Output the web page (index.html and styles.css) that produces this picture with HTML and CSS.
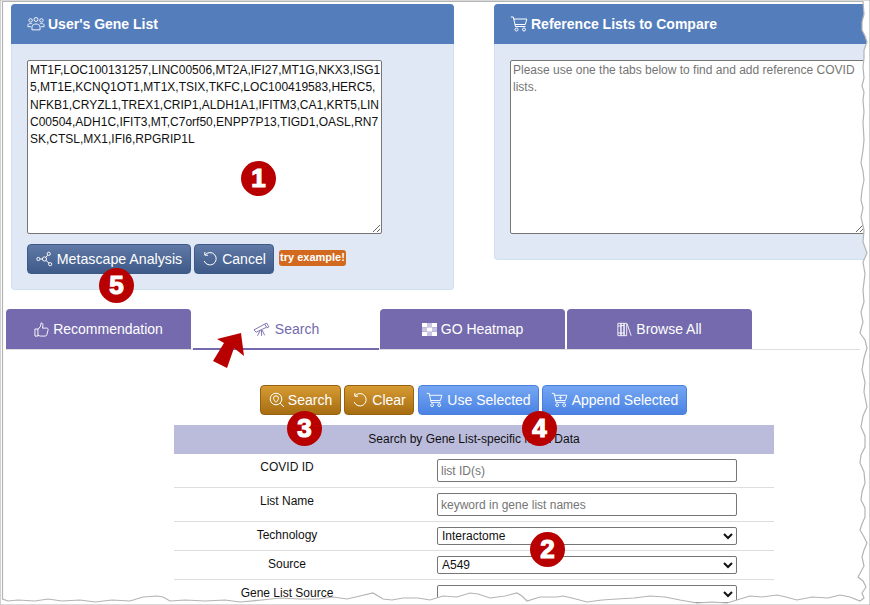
FILE: index.html
```html
<!DOCTYPE html>
<html lang="en">
<head>
<meta charset="utf-8">
<title>Metascape COVID gene list comparison</title>
<link rel="stylesheet" href="styles.css">
</head>
<body>
<div class="page">
  <section class="panels">
    <div class="panel panel-user">
      <h2 class="panel-head">
        <svg class="ico ico-head" viewBox="0 0 20 16"><circle cx="4" cy="4" r="1.9"/><circle cx="10" cy="3" r="2.2"/><circle cx="16" cy="4" r="1.9"/><path d="M1 11V9.500C1 8 2.200 7.500 4 7.500c.8 0 1.400.1 1.900.4M19 11V9.500C19 8 17.800 7.500 16 7.500c-.8 0-1.400.1-1.900.4M5.500 14.500v-3C5.500 9.300 7.500 8 10 8s4.500 1.300 4.500 3.500v3zM1 11h3.500M15.500 11H19"/></svg>
        User's Gene List
      </h2>
      <div class="panel-body">
        <textarea class="gene-text" spellcheck="false">MT1F,LOC100131257,LINC00506,MT2A,IFI27,MT1G,NKX3,ISG15,MT1E,KCNQ1OT1,MT1X,TSIX,TKFC,LOC100419583,HERC5,NFKB1,CRYZL1,TREX1,CRIP1,ALDH1A1,IFITM3,CA1,KRT5,LINC00504,ADH1C,IFIT3,MT,C7orf50,ENPP7P13,TIGD1,OASL,RN7SK,CTSL,MX1,IFI6,RPGRIP1L</textarea>
        <div class="actions">
          <button class="btn btn-navy btn-meta">
            <svg class="ico" viewBox="0 0 18 16"><circle cx="2.500" cy="8" r="1.700"/><circle cx="9" cy="8" r="2.200"/><circle cx="13.500" cy="2.500" r="1.700"/><circle cx="15" cy="13.500" r="1.700"/><path d="M4.200 8h2.600M10.400 6.300l2-2.400M10.600 9.600l3.200 2.700"/></svg>
            Metascape Analysis
          </button>
          <button class="btn btn-navy btn-cancel">
            <svg class="ico ico-undo" viewBox="0 0 16 16"><path d="M3.200 3.800A6.200 6.200 0 1 1 2.200 10M2.800 1v3.200H6"/></svg>
            Cancel
          </button>
          <span class="try">try example!</span>
        </div>
      </div>
    </div>
    <div class="panel panel-ref">
      <h2 class="panel-head">
        <svg class="ico ico-head" viewBox="0 0 18 16"><path d="M.8 1h2.600l2 9.500h10M3.800 3h13l-1.500 5.500H5"/><circle cx="6.500" cy="13.500" r="1.500"/><circle cx="14" cy="13.500" r="1.500"/></svg>
        Reference Lists to Compare
      </h2>
      <div class="panel-body">
        <textarea class="gene-text ref-text" placeholder="Please use one the tabs below to find and add reference COVID lists."></textarea>
      </div>
    </div>
  </section>

  <nav class="tabs">
    <a class="tab">
      <svg class="ico ico-tab" viewBox="0 0 16 16"><path d="M1 7.500h3.200V15H1zM4.200 8 7 4.500 7.500 1c1.500 0 2.300 1 2 2.800L9 6.500h4.500c1.300 0 1.800 1 1.500 2l-1.300 5c-.2 1-.9 1.500-1.800 1.500H7c-1.200 0-1.800-.5-2.800-1"/></svg>
      Recommendation
    </a>
    <a class="tab tab-active">
      <svg class="ico ico-scope" viewBox="0 0 20 16"><path d="M1 8.500l12-6.500 2 3.500-11.500 5.500zM13 2l2.200-1 2.500 4-2.700 1.200M8 9l-3 6M9.500 8.500V15M10 8.500l3 6"/></svg>
      Search
    </a>
    <a class="tab">
      <svg class="ico-grid" viewBox="0 0 15 13"><path fill="#fff" d="M0 0h5v4.300H0zM10 0h5v4.300h-5zM5 4.300h5v4.400H5zM0 8.700h5V13H0zM10 8.700h5V13h-5z"/><path fill="#c9c5e2" d="M5 0h5v4.300H5zM0 4.300h5v4.400H0zM10 4.300h5v4.400h-5zM5 8.700h5V13H5z"/></svg>
      GO Heatmap
    </a>
    <a class="tab">
      <svg class="ico ico-tab" viewBox="0 0 17 16"><path d="M1 1h3.500v14H1zM4.500 1H8v14H4.500zM8 1h3v14H8zM11.500 1.500l4.500 13.500M1 4h3.500M1 12h3.500M4.500 3.500H8M4.500 12H8"/></svg>
      Browse All
    </a>
  </nav>

  <section class="search">
    <div class="toolbar">
      <button class="btn btn-gold btn-search">
        <svg class="ico ico-undo" viewBox="0 0 16 16"><circle cx="7" cy="7" r="5.800"/><path d="M11.200 11.200 15 15M7 3.800A2.500 2.500 0 0 0 4.500 6.300C4.500 8 7 10.300 7 10.300S9.500 8 9.500 6.300A2.500 2.500 0 0 0 7 3.800z"/></svg>
        Search
      </button>
      <button class="btn btn-gold btn-clear">
        <svg class="ico ico-undo" viewBox="0 0 16 16"><path d="M3.200 3.800A6.200 6.200 0 1 1 2.200 10M2.800 1v3.200H6"/></svg>
        Clear
      </button>
      <button class="btn btn-blue btn-use">
        <svg class="ico" viewBox="0 0 18 16"><path d="M.8 1h2.600l2 9.500h10M3.800 3h13l-1.500 5.500H5"/><circle cx="6.500" cy="13.500" r="1.500"/><circle cx="14" cy="13.500" r="1.500"/></svg>
        Use Selected
      </button>
      <button class="btn btn-blue btn-append">
        <svg class="ico" viewBox="0 0 18 16"><path d="M.8 1h2.600l2 9.500h10M3.800 3h13l-1.500 5.500H5M10 4v3.500M8.200 5.700h3.600"/><circle cx="6.500" cy="13.500" r="1.500"/><circle cx="14" cy="13.500" r="1.500"/></svg>
        Append Selected
      </button>
    </div>
    <div class="form">
      <div class="form-head">Search by Gene List-specific Meta Data</div>
      <div class="row row-tall">
        <label class="row-label">COVID ID</label>
        <input class="field" placeholder="list ID(s)">
      </div>
      <div class="row row-tall">
        <label class="row-label">List Name</label>
        <input class="field" placeholder="keyword in gene list names">
      </div>
      <div class="row">
        <label class="row-label">Technology</label>
        <select class="pick"><option>Interactome</option></select>
      </div>
      <div class="row">
        <label class="row-label">Source</label>
        <select class="pick"><option>A549</option></select>
      </div>
      <div class="row">
        <label class="row-label">Gene List Source</label>
        <select class="pick"><option></option></select>
      </div>
    </div>
  </section>

  <svg class="torn" viewBox="0 0 870 605" aria-hidden="true">
    <path class="torn-mask" fill-rule="evenodd" d="M0 0H870V605H0Z M2.500 1.500 L863 1.500 L864 14 L862 22 L862 30 L865 36 L867 42 L864 50 L864 58 L863 67 L864 78 L862 86 L864 92 L863 100 L864 112 L863 122 L864 140 L863 150 L861 163 L863 171 L864 180 L862 190 L861 200 L863 208 L861 217 L864 230 L863 242 L867 253 L863 262 L865 274 L863 290 L864 302 L861 312 L863 322 L860 333 L865 340 L867 348 L864 358 L862 370 L865 382 L864 392 L867 407 L863 416 L861 427 L865 436 L865 447 L861 455 L860 463 L864 472 L865 483 L862 492 L861 500 L865 508 L865 517 L862 524 L860 530 L864 537 L867 543 L864 550 L862 557 L864 566 L858 577 L863 581 L866 587 L862 593 L864 598 L860 601 L850 597 L840 595 L828 598 L812 597 L797 600 L786 597 L777 595 L762 597 L750 596 L740 599 L727 603 L712 602 L697 603 L680 600 L665 597 L650 596 L634 598 L617 599 L602 600 L587 602 L572 598 L563 596 L557 597 L540 597 L527 601 L522 596 L517 593 L505 596 L490 598 L478 594 L470 593 L457 597 L443 596 L430 600 L418 598 L403 598 L392 600 L383 599 L373 593 L360 596 L347 599 L333 597 L318 599 L300 599 L280 598 L262 600 L240 602 L225 600 L205 601 L185 600 L170 601 L163 597 L157 596 L143 597 L130 601 L112 600 L95 602 L80 600 L62 601 L48 599 L35 601 L18 600 L8 601 L2.500 599 Z"/>
  </svg>

  <span class="badge badge-1">1</span>
  <span class="badge badge-2">2</span>
  <span class="badge badge-3">3</span>
  <span class="badge badge-4">4</span>
  <span class="badge badge-5">5</span>
  <svg class="arrow" viewBox="0 0 870 605" aria-hidden="true"><path fill="#b80000" d="M217 339 241 333 244 356 234 348 227 368 213 361 224 343Z"/></svg>
</div>
</body>
</html>
```
FILE: styles.css
```css
* { box-sizing: border-box; }
html, body { margin: 0; padding: 0; background: #fff; }
body { font-family: "Liberation Sans", Arial, sans-serif; }

.page {
  position: relative;
  width: 870px;
  height: 605px;
  overflow: hidden;
  padding: 4px 0 0 0;
}

/* Upper panels */
.panels { display: flex; align-items: flex-start; gap: 40px; margin-left: 11px; width: 926px; }
.panel {
  flex: 0 0 443px;
  background: #e0e8f5;
  border: 1px solid #cfe0f0;
  border-top: 0;
  border-radius: 4px;
}
.panel-user { height: 286px; }
.panel-ref { height: 256px; }
.panel-head {
  display: flex;
  align-items: center;
  gap: 3px;
  height: 40px;
  margin: 0 -1px;
  padding: 0 0 0 16px;
  background: #547dbb;
  border-radius: 4px 4px 0 0;
  color: #fff;
  font-size: 14px;
  font-weight: 700;
}
.panel-body { padding: 16px 15px 0; }
.gene-text {
  display: block;
  width: 355px;
  height: 174px;
  padding: 1px 0 0 2px;
  margin: 0;
  border: 1px solid #767676;
  border-radius: 2px;
  background: #fff;
  color: #111;
  font: 12px/17.250px "Liberation Sans", Arial, sans-serif;
  word-break: break-all;
  resize: both;
  outline: none;
}
.ref-text { word-break: normal; }
.ref-text::placeholder { color: #757575; opacity: 1; }

.actions { display: flex; align-items: flex-start; gap: 3px; margin-top: 10px; }

/* Buttons */
.btn {
  display: inline-flex;
  align-items: center;
  justify-content: center;
  gap: 4px;
  height: 30px;
  padding: 0;
  border: 1px solid;
  border-radius: 4px;
  color: #fff;
  font: 14px "Liberation Sans", Arial, sans-serif;
  white-space: nowrap;
}
.btn-navy { background: linear-gradient(#6079a6, #3e5a88); border-color: #3e5a88; }
.btn-gold { background: linear-gradient(#d79b32, #a66d12); border-color: #96620f; }
.btn-blue { background: linear-gradient(#74a6f2, #4b83e4); border-color: #4a80dd; }
.btn-meta { width: 164px; font-size: 14.200px; }
.btn-cancel { width: 80px; }
.btn-search { width: 81px; gap: 3px; }
.btn-clear { width: 70px; }
.btn-use { width: 121px; margin-left: 1px; }
.btn-append { width: 145px; }

.try {
  margin: 6px 0 0 2px;
  height: 16px;
  width: 67px;
  background: #d2691e;
  border-radius: 3px;
  color: #fff;
  font-size: 11px;
  line-height: 14px;
  font-weight: 700;
  text-align: center;
  white-space: nowrap;
}

.ico {
  flex: none;
  width: 17px;
  height: 16px;
  fill: none;
  stroke: currentColor;
  stroke-width: 1;
}
.ico-head { width: 18px; height: 16px; }
.ico-undo { width: 16px; }
.ico-tab { width: 15px; height: 15px; }
.ico-scope { width: 18px; height: 15px; }
.ico-grid { flex: none; width: 15px; height: 13px; }

/* Tabs */
.tabs {
  display: flex;
  align-items: stretch;
  margin: 19px 0 0 6px;
  width: 854px;
  height: 41px;
  border-bottom: 1px solid #ddd;
}
.tab {
  display: flex;
  align-items: center;
  justify-content: center;
  gap: 4px;
  flex: 0 0 185px;
  height: 40px;
  margin-right: 2px;
  background: #746aad;
  border-radius: 4px 4px 0 0;
  color: #fff;
  font-size: 14px;
}
.tab-active {
  flex-basis: 186px;
  height: 41px;
  margin-right: 1px;
  padding-top: 1px;
  background: #fff;
  color: #746aad;
  border-bottom: 2px solid #746aad;
  border-radius: 0;
}

/* Search form */
.search { display: flex; flex-direction: column; align-items: flex-start; }
.toolbar { display: flex; gap: 3px; margin: 35px 0 0 260px; }
.form { width: 600px; margin: 10px 0 0 174px; color: #111; font-size: 12px; }
.form-head {
  height: 29px;
  background: #bbbbdc;
  line-height: 28px;
  text-align: center;
}
.row {
  display: grid;
  grid-template-columns: 226px 300px;
  column-gap: 37px;
  align-items: start;
  height: 29px;
  padding-top: 5px;
  border-bottom: 1px solid #ddd;
}
.row-tall { height: 34px; }
.row-label { text-align: center; line-height: 14px; padding-top: 1px; }
.field {
  width: 300px;
  height: 23px;
  padding: 0 3px;
  border: 1px solid #767676;
  border-radius: 2px;
  font: 12px "Liberation Sans", Arial, sans-serif;
  outline: none;
}
.field::placeholder { color: #757575; opacity: 1; }
.pick {
  width: 300px;
  height: 18px;
  padding: 0;
  border: 1px solid #767676;
  border-radius: 2px;
  background-color: #fff;
  color: #111;
  font: 12px "Liberation Sans", Arial, sans-serif;
}

/* Overlays */
.torn, .arrow { position: absolute; left: 0; top: 0; width: 870px; height: 605px; pointer-events: none; }
.torn-mask { fill: #fff; stroke: #b4b4b4; stroke-width: 1.200; }

.badge {
  position: absolute;
  width: 35px;
  height: 35px;
  border-radius: 50%;
  background: #b80000;
  color: #fff;
  font: 700 26px/35px "Liberation Sans", Arial, sans-serif;
  -webkit-text-stroke: 1.200px #fff;
  text-align: center;
}
.badge-1 { left: 241px; top: 161px; }
.badge-2 { left: 530px; top: 532px; }
.badge-3 { left: 287px; top: 411px; }
.badge-4 { left: 522px; top: 411px; }
.badge-5 { left: 99px; top: 268px; }
```
